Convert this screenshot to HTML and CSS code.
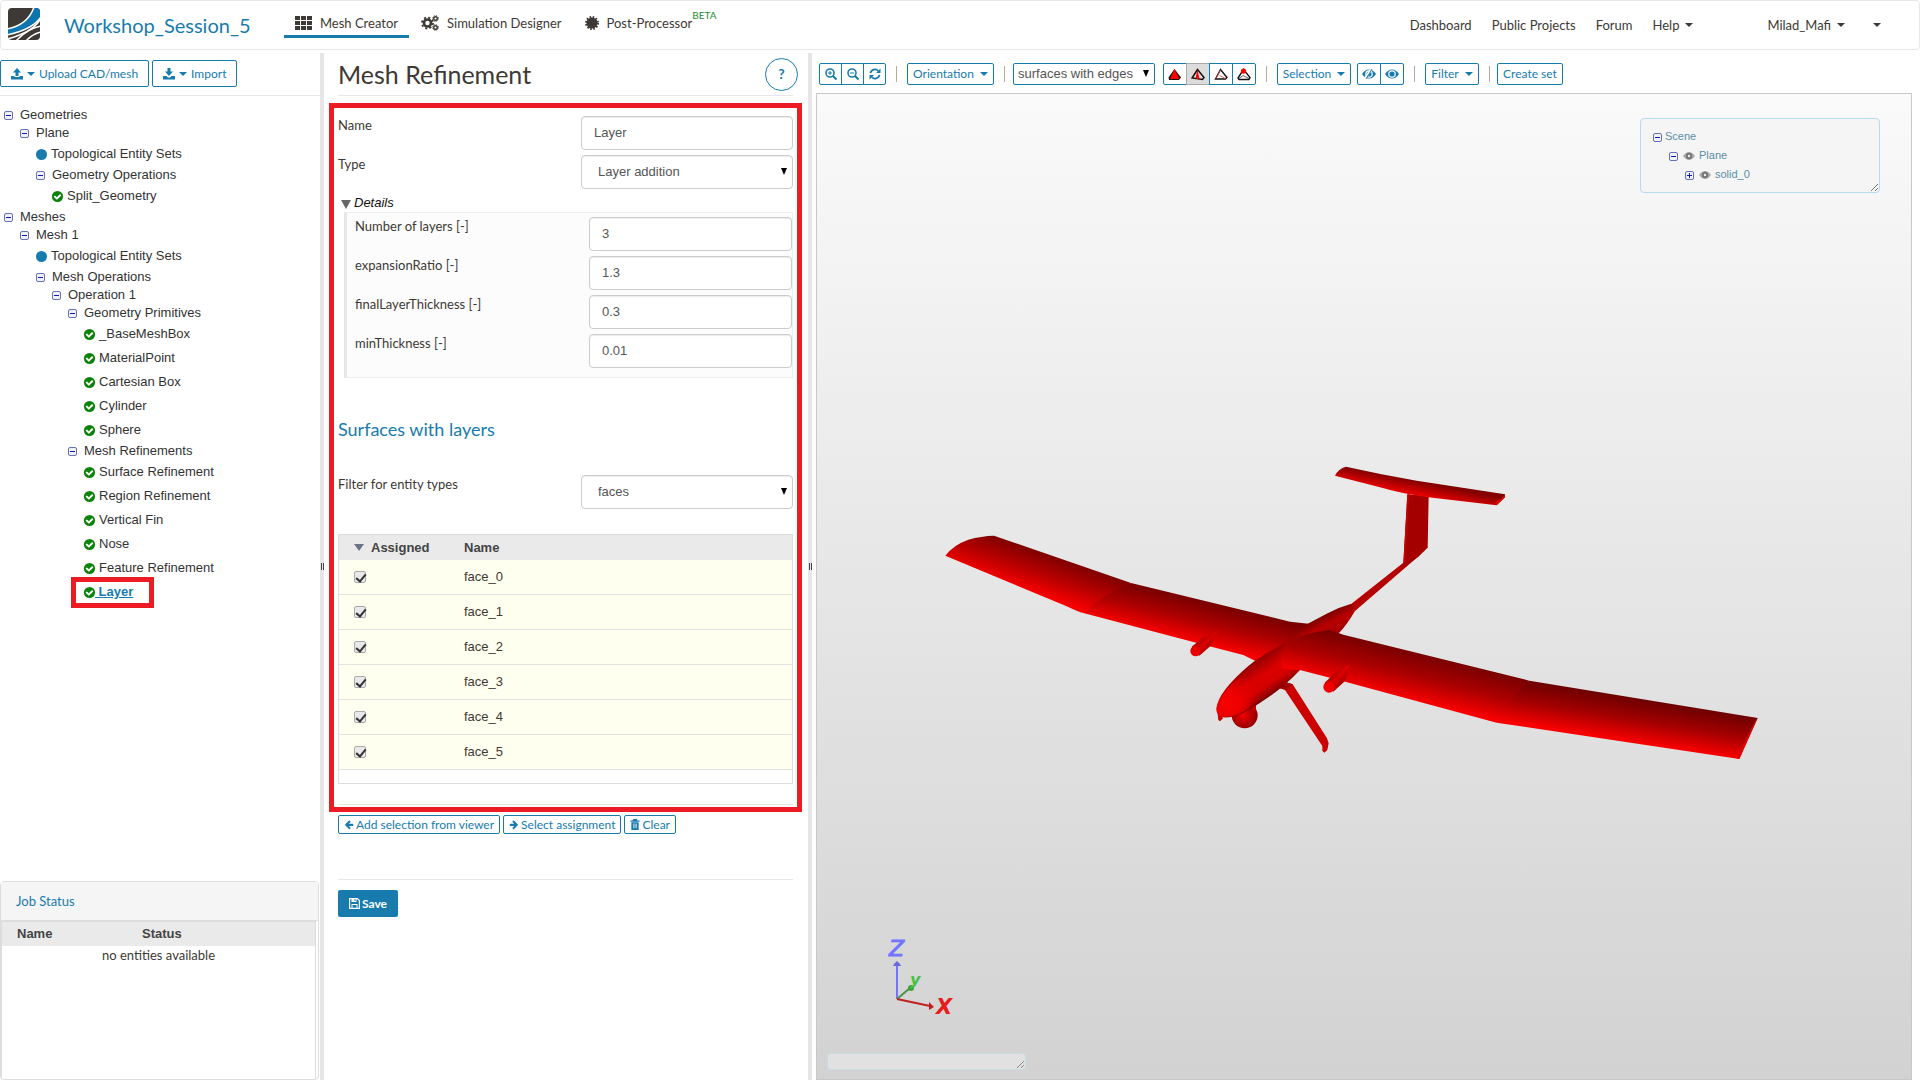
FILE: index.html
```html
<!DOCTYPE html>
<html lang="en">
<head>
<meta charset="utf-8">
<title>Workshop_Session_5 - Mesh Creator</title>
<link rel="stylesheet" href="styles.css">
</head>
<body>
<svg class="sprite" aria-hidden="true">
  <symbol id="i-check" viewBox="0 0 1792 1792"><circle cx="896" cy="896" r="768" fill="#0b830b"/><path fill="#fff" d="M1412 734q0-28-18-46l-91-90q-19-19-45-19t-45 19l-408 407-226-226q-19-19-45-19t-45 19l-91 90q-18 18-18 46 0 27 18 45l362 362q19 19 45 19 27 0 46-19l543-543q18-18 18-45z"/></symbol>
  <symbol id="i-left" viewBox="0 0 1792 1792"><path d="M1664 896v128q0 53-32.5 90.5t-84.5 37.5h-704l293 294q38 36 38 90t-38 90l-75 76q-37 37-90 37-52 0-91-37l-651-652q-37-37-37-90 0-52 37-91l651-650q38-38 91-38 52 0 90 38l75 74q38 38 38 91t-38 91l-293 293h704q52 0 84.5 37.5t32.5 90.5z"/></symbol>
  <symbol id="i-minus" viewBox="0 0 9 9"><rect x=".5" y=".5" width="8" height="8" rx="1.5" fill="#f1f1f8" stroke="#6572b8"/><path d="M2 4.500h5" stroke="#1616b4"/></symbol>
  <symbol id="i-plus" viewBox="0 0 9 9"><rect x=".5" y=".5" width="8" height="8" rx="1.5" fill="#f1f1f8" stroke="#6572b8"/><path d="M2 4.500h5M4.500 2v5" stroke="#1616b4"/></symbol>
  <symbol id="i-eye" viewBox="0 0 14 10"><path d="M0 5Q3 .5 7 .5T14 5Q11 9.500 7 9.500T0 5z"/><circle cx="7" cy="5" r="3.800" fill="#fff"/><circle cx="7" cy="5" r="2.600"/></symbol>
  <symbol id="i-eye-grey" viewBox="0 0 12 8"><path d="M0 4Q3 0 6 0t6 4Q9 8 6 8T0 4z" fill="#aaa"/><circle cx="6" cy="4" r="3.200" fill="#777"/><circle cx="6" cy="4" r="1.200" fill="#eee"/></symbol>
  <symbol id="i-up" viewBox="0 0 12 12"><path d="M6 0l4 4.500H7.500V8h-3V4.500H2zM0 8h3.500v1h5V8H12v3.500H0z"/></symbol>
  <symbol id="i-down" viewBox="0 0 12 12"><path d="M4.500 0h3v3.500H10L6 8 2 3.500h2.500zM0 8h3.500l1.500 1.500h2L8.500 8H12v3.500H0z"/></symbol>
  <symbol id="i-grid" viewBox="0 0 17 14"><path d="M0 0h5v4H0zM6 0h5v4H6zM12 0h5v4h-5zM0 5h5v4H0zM6 5h5v4H6zM12 5h5v4h-5zM0 10h5v4H0zM6 10h5v4H6zM12 10h5v4h-5z"/></symbol>
  <symbol id="i-cogs" viewBox="0 0 18 16"><g fill="none" stroke="currentColor"><circle cx="6.500" cy="8" r="3.500" stroke-width="2.600"/><circle cx="6.500" cy="8" r="5.500" stroke-width="1.800" stroke-dasharray="2.160 2.160"/><circle cx="14.500" cy="3.500" r="1.800" stroke-width="1.400"/><circle cx="14.500" cy="3.500" r="2.900" stroke-width="1" stroke-dasharray="1.140 1.140"/><circle cx="14.500" cy="12.500" r="1.800" stroke-width="1.400"/><circle cx="14.500" cy="12.500" r="2.900" stroke-width="1" stroke-dasharray="1.140 1.140"/></g></symbol>
  <symbol id="i-burst" viewBox="0 0 14 14"><circle cx="7" cy="7" r="5.500"/><circle cx="7" cy="7" r="6" fill="none" stroke="currentColor" stroke-width="2" stroke-dasharray="1.570 1.570"/></symbol>
  <symbol id="i-zin" viewBox="0 0 12 12"><g fill="none" stroke="currentColor"><circle cx="5" cy="5" r="4" stroke-width="1.600"/><path d="M8 8l3.500 3.500" stroke-width="2"/><path d="M3 5h4M5 3v4"/></g></symbol>
  <symbol id="i-zout" viewBox="0 0 12 12"><g fill="none" stroke="currentColor"><circle cx="5" cy="5" r="4" stroke-width="1.600"/><path d="M8 8l3.500 3.500" stroke-width="2"/><path d="M3 5h4"/></g></symbol>
  <symbol id="i-refresh" viewBox="0 0 12 12"><path d="M1.500 5.200A4.500 4.500 0 0 1 9.300 3M10.500 6.800A4.500 4.500 0 0 1 2.700 9" fill="none" stroke="currentColor" stroke-width="1.700"/><path d="M11.500.5v4.500H7zM.5 11.500V7H5z"/></symbol>
  <symbol id="i-trash" viewBox="0 0 10 12"><path d="M3 0h4l.7 1.500H10V3H0V1.500h2.300zM1 3.500h8V12H1z"/><path d="M3.500 5v5M5 5v5M6.500 5v5" stroke="#fff" stroke-width=".7"/></symbol>
  <symbol id="i-save" viewBox="0 0 11 11"><path d="M.6.600h7.800l2 2v7.800H.6z" fill="none" stroke="currentColor" stroke-width="1.200"/><path d="M2.500.5h5V4h-5zM2.500 6h6v5h-1V7h-4v4h-1z"/><path d="M5.500 1h1v2h-1z" fill="#177bae"/></symbol>
  <symbol id="t-a" viewBox="0 0 14 12"><path d="M6.500.5L13 9l-2 2.500H1L.5 9z" fill="#111"/><path d="M6.500 .5l5 10H2z" fill="#f00"/></symbol>
  <symbol id="t-b" viewBox="0 0 14 12"><path d="M6.500 1L1 9.500 11.500 11 13 9z" fill="#ddd" stroke="#111" stroke-width="1.500"/><path d="M6.500 1L4.500 10l4 1z" fill="#f00"/></symbol>
  <symbol id="t-c" viewBox="0 0 14 12"><path d="M6.500 1L1.500 10.500h10L13 9z" fill="#fff" stroke="#111" stroke-width="1.400"/><path d="M6.500 1.500L2 10M5.500 7l6 3" stroke="#e44" stroke-width=".8"/></symbol>
  <symbol id="t-d" viewBox="0 0 14 12"><path d="M6.500 1L1 9.500l1 1.500h10l1-2z" fill="#fff" stroke="#111" stroke-width="1.400"/><path d="M2 10l4-3 6 3" fill="none" stroke="#333" stroke-width=".8"/><circle cx="6.500" cy="2.600" r="2.600" fill="#f00"/></symbol>
</svg>

<header class="topbar">
  <a class="logo" href="#" aria-label="Home"><svg viewBox="0 0 32 32"><defs><clipPath id="lc"><rect width="32" height="32" rx="4"/></clipPath></defs><g clip-path="url(#lc)"><rect width="32" height="32" fill="#3d3935"/><path d="M26 0H32V9Q24 21 0 27V21Q20 17 26 0z" fill="#0d76b0"/><g fill="none" stroke="#fff" stroke-width="1.500"><path d="M26 -1Q20 17 -1 21M33 9Q24 22 -1 27M33 18Q20 20 8 33M33 24Q24 26 18 33"/><path d="M33 10Q26 24 -1 31"/></g></g></svg></a>
  <a class="project" href="#">Workshop_Session_5</a>
  <nav class="tabs">
    <a class="tab active" href="#"><svg class="ic-grid"><use href="#i-grid"/></svg>Mesh Creator</a>
    <a class="tab" href="#"><svg class="ic-cogs"><use href="#i-cogs"/></svg>Simulation Designer</a>
    <a class="tab" href="#"><svg class="ic-burst"><use href="#i-burst"/></svg>Post-Processor<sup>BETA</sup></a>
  </nav>
  <nav class="menu">
    <a href="#">Dashboard</a><a href="#">Public Projects</a><a href="#">Forum</a><a href="#">Help<i class="caret"></i></a>
    <a class="user" href="#">Milad_Mafi<i class="caret"></i></a><a class="more" href="#" aria-label="More"><i class="caret"></i></a>
  </nav>
</header>

<div class="workspace">
  <aside class="side">
    <div class="side-actions">
      <button class="btn"><svg class="ic12"><use href="#i-up"/></svg><i class="caret"></i>Upload CAD/mesh</button>
      <button class="btn"><svg class="ic12"><use href="#i-down"/></svg><i class="caret"></i>Import</button>
    </div>
    <ul class="tree">
      <li><span class="node"><svg class="ex"><use href="#i-minus"/></svg>Geometries</span>
        <ul>
          <li><span class="node"><svg class="ex"><use href="#i-minus"/></svg>Plane</span>
            <ul>
              <li><a class="leaf" href="#"><i class="dot"></i>Topological Entity Sets</a></li>
              <li><span class="node"><svg class="ex"><use href="#i-minus"/></svg>Geometry Operations</span>
                <ul><li><a class="leaf" href="#"><svg class="ok"><use href="#i-check"/></svg>Split_Geometry</a></li></ul></li>
            </ul></li>
        </ul></li>
      <li><span class="node"><svg class="ex"><use href="#i-minus"/></svg>Meshes</span>
        <ul>
          <li><span class="node"><svg class="ex"><use href="#i-minus"/></svg>Mesh 1</span>
            <ul>
              <li><a class="leaf" href="#"><i class="dot"></i>Topological Entity Sets</a></li>
              <li><span class="node"><svg class="ex"><use href="#i-minus"/></svg>Mesh Operations</span>
                <ul>
                  <li><span class="node"><svg class="ex"><use href="#i-minus"/></svg>Operation 1</span>
                    <ul>
                      <li><span class="node"><svg class="ex"><use href="#i-minus"/></svg>Geometry Primitives</span>
                        <ul>
                          <li><a class="leaf" href="#"><svg class="ok"><use href="#i-check"/></svg>_BaseMeshBox</a></li>
                          <li><a class="leaf" href="#"><svg class="ok"><use href="#i-check"/></svg>MaterialPoint</a></li>
                          <li><a class="leaf" href="#"><svg class="ok"><use href="#i-check"/></svg>Cartesian Box</a></li>
                          <li><a class="leaf" href="#"><svg class="ok"><use href="#i-check"/></svg>Cylinder</a></li>
                          <li><a class="leaf" href="#"><svg class="ok"><use href="#i-check"/></svg>Sphere</a></li>
                        </ul></li>
                      <li><span class="node"><svg class="ex"><use href="#i-minus"/></svg>Mesh Refinements</span>
                        <ul>
                          <li><a class="leaf" href="#"><svg class="ok"><use href="#i-check"/></svg>Surface Refinement</a></li>
                          <li><a class="leaf" href="#"><svg class="ok"><use href="#i-check"/></svg>Region Refinement</a></li>
                          <li><a class="leaf" href="#"><svg class="ok"><use href="#i-check"/></svg>Vertical Fin</a></li>
                          <li><a class="leaf" href="#"><svg class="ok"><use href="#i-check"/></svg>Nose</a></li>
                          <li><a class="leaf" href="#"><svg class="ok"><use href="#i-check"/></svg>Feature Refinement</a></li>
                          <li><a class="leaf current" href="#"><svg class="ok"><use href="#i-check"/></svg><b>&nbsp;Layer</b></a></li>
                        </ul></li>
                    </ul></li>
                </ul></li>
            </ul></li>
        </ul></li>
    </ul>
    <section class="jobs">
      <h2>Job Status</h2>
      <div class="jobs-body">
        <table>
          <thead><tr><th class="job-name">Name</th><th>Status</th></tr></thead>
          <tbody><tr><td colspan="2">no entities available</td></tr></tbody>
        </table>
      </div>
    </section>
  </aside>
  <div class="splitter"><i></i></div>

  <main class="props">
    <div class="props-head"><h1>Mesh Refinement</h1><button class="help" aria-label="Help">?</button></div>
    <div class="marked">
      <div class="field"><label for="name">Name</label><input id="name" type="text" value="Layer"></div>
      <div class="field"><label for="type">Type</label><span class="pick"><select id="type"><option>Layer addition</option></select></span></div>
      <details class="details" open>
        <summary>Details</summary>
        <div class="sub">
          <div class="field"><label for="nl">Number of layers [-]</label><input id="nl" type="text" value="3"></div>
          <div class="field"><label for="er">expansionRatio [-]</label><input id="er" type="text" value="1.3"></div>
          <div class="field"><label for="ft">finalLayerThickness [-]</label><input id="ft" type="text" value="0.3"></div>
          <div class="field"><label for="mt">minThickness [-]</label><input id="mt" type="text" value="0.01"></div>
        </div>
      </details>
      <h2 class="section">Surfaces with layers</h2>
      <div class="field"><label for="filter">Filter for entity types</label><span class="pick"><select id="filter"><option>faces</option></select></span></div>
      <div class="faces">
        <table>
          <thead><tr><th class="assigned"><i class="sort"></i>Assigned</th><th>Name</th></tr></thead>
          <tbody>
            <tr><td><input type="checkbox" id="f0" checked></td><td><label for="f0">face_0</label></td></tr>
            <tr><td><input type="checkbox" id="f1" checked></td><td><label for="f1">face_1</label></td></tr>
            <tr><td><input type="checkbox" id="f2" checked></td><td><label for="f2">face_2</label></td></tr>
            <tr><td><input type="checkbox" id="f3" checked></td><td><label for="f3">face_3</label></td></tr>
            <tr><td><input type="checkbox" id="f4" checked></td><td><label for="f4">face_4</label></td></tr>
            <tr><td><input type="checkbox" id="f5" checked></td><td><label for="f5">face_5</label></td></tr>
          </tbody>
        </table>
      </div>
      <hr>
    </div>
    <div class="assign">
      <button class="btn mini"><svg class="ic10"><use href="#i-left"/></svg>Add selection from viewer</button>
      <button class="btn mini"><svg class="ic10 flip"><use href="#i-left"/></svg>Select assignment</button>
      <button class="btn mini"><svg class="ic10"><use href="#i-trash"/></svg>Clear</button>
    </div>
    <hr>
    <button class="save"><svg class="ic11"><use href="#i-save"/></svg>Save</button>
  </main>
  <div class="splitter"><i></i></div>

  <section class="viewer">
    <div class="toolbar">
      <div class="group g3">
        <button class="btn" aria-label="Zoom in"><svg class="ic12"><use href="#i-zin"/></svg></button>
        <button class="btn" aria-label="Zoom out"><svg class="ic12"><use href="#i-zout"/></svg></button>
        <button class="btn" aria-label="Reset view"><svg class="ic12"><use href="#i-refresh"/></svg></button>
      </div>
      <i class="sep"></i>
      <button class="btn w-orient">Orientation<i class="caret"></i></button>
      <i class="sep"></i>
      <span class="pick render"><select aria-label="Render mode"><option>surfaces with edges</option></select></span>
      <div class="group g4">
        <button class="btn" aria-label="Pick volumes"><svg class="ic14"><use href="#t-a"/></svg></button>
        <button class="btn pressed" aria-label="Pick faces"><svg class="ic14"><use href="#t-b"/></svg></button>
        <button class="btn" aria-label="Pick edges"><svg class="ic14"><use href="#t-c"/></svg></button>
        <button class="btn" aria-label="Pick nodes"><svg class="ic14"><use href="#t-d"/></svg></button>
      </div>
      <i class="sep"></i>
      <button class="btn w-select">Selection<i class="caret"></i></button>
      <div class="group g2">
        <button class="btn" aria-label="Hide"><svg class="eye"><use href="#i-eye"/><path d="M3 9.500L9 .5" stroke="#fff" stroke-width="2.400"/><path d="M4 10L10 0" stroke="currentColor"/></svg></button>
        <button class="btn" aria-label="Show"><svg class="eye"><use href="#i-eye"/></svg></button>
      </div>
      <i class="sep"></i>
      <button class="btn w-filter">Filter<i class="caret"></i></button>
      <i class="sep last"></i>
      <button class="btn w-set">Create set</button>
    </div>
    <div class="canvas">
      <svg class="model" viewBox="817 94 1094 985" role="img" aria-label="Plane model">
        <defs>
          <linearGradient id="w1" gradientUnits="userSpaceOnUse" x1="282" y1="287" x2="241" y2="405"><stop offset="0" stop-color="#800000"/><stop offset=".5" stop-color="#b80000"/><stop offset="1" stop-color="#fb0000"/></linearGradient>
          <linearGradient id="w2" gradientUnits="userSpaceOnUse" x1="693" y1="429" x2="663" y2="552"><stop offset="0" stop-color="#780000"/><stop offset=".5" stop-color="#ac0000"/><stop offset="1" stop-color="#f80000"/></linearGradient>
          <linearGradient id="w3" gradientUnits="userSpaceOnUse" x1="1330" y1="584" x2="1296" y2="724"><stop offset="0" stop-color="#780000"/><stop offset=".5" stop-color="#ac0000"/><stop offset="1" stop-color="#fb0000"/></linearGradient>
          <linearGradient id="w4" gradientUnits="userSpaceOnUse" x1="1888" y1="722" x2="1867" y2="852"><stop offset="0" stop-color="#6c0000"/><stop offset=".5" stop-color="#a40000"/><stop offset="1" stop-color="#f80000"/></linearGradient>
          <linearGradient id="tp" gradientUnits="userSpaceOnUse" x1="1550" y1="122" x2="1541" y2="168"><stop offset="0" stop-color="#800000"/><stop offset="1" stop-color="#f40000"/></linearGradient>
          <linearGradient id="fu" gradientUnits="userSpaceOnUse" x1="1040" y1="670" x2="1110" y2="775"><stop offset="0" stop-color="#880000"/><stop offset=".45" stop-color="#dc0000"/><stop offset=".7" stop-color="#d40000"/><stop offset="1" stop-color="#700000"/></linearGradient>
          <linearGradient id="rc" gradientUnits="userSpaceOnUse" x1="1270" y1="525" x2="1298" y2="580"><stop offset="0" stop-color="#780000"/><stop offset=".5" stop-color="#b80000"/><stop offset="1" stop-color="#a80000"/></linearGradient>
          <linearGradient id="pd" x1="0" y1="0" x2="1" y2="1"><stop offset=".2" stop-color="#8c0000"/><stop offset=".5" stop-color="#dc0000"/><stop offset=".85" stop-color="#880000"/></linearGradient>
          <radialGradient id="ns" gradientUnits="userSpaceOnUse" cx="985" cy="790" r="95"><stop offset="0" stop-color="#f80000"/><stop offset=".4" stop-color="#ec0000"/><stop offset="1" stop-color="#e00000" stop-opacity="0"/></radialGradient>
          <radialGradient id="bl" cx=".45" cy=".5" r=".55"><stop offset="0" stop-color="#f00000"/><stop offset="1" stop-color="#900000"/></radialGradient>
        </defs>
        <g transform="translate(900 440) scale(.33333)">
          <path fill="url(#w2)" d="M693 429L1170 545L1240 553L1190 600L1068 664L1030 645L937 621L550 519L520 480z"/>
          <path fill="url(#w1)" d="M136 347Q160 315 205 299Q245 288 282 287L693 429Q600 470 550 519Q535 516 500 499z"/>
          <path fill="#b40000" d="M1346 498L1510 368L1560 345L1365 513z"/>
          <path fill="#a40000" d="M1522 163L1586 168L1583 323L1555 350L1509 383z"/>
          <path fill="#c80000" d="M1522 163H1528L1515 366L1510 372z"/>
          <path fill="url(#tp)" d="M1305 107Q1315 86 1338 80Q1440 103 1550 122L1815 163V172L1790 196L1585 172Q1500 160 1440 142z"/>
          <path fill="#e80000" d="M1815 165V172L1790 196L1786 190z"/>
          <circle cx="1034" cy="826" r="39" fill="url(#bl)"/><path d="M1040 800L1068 793V815z" fill="#c80000"/>
          <path d="M953 822L955 840L960 844L970 834z" fill="#c80000"/>
          <path fill="#cc0000" d="M1130 742L1158 727L1178 733L1281 895L1286 910L1282 930L1273 938L1267 932V918L1155 750z"/><path d="M1130 742L1158 727L1178 733L1160 750z" fill="#a00000"/>
          <path fill="url(#rc)" d="M1352 492Q1315 502 1280 521L1222 552L1150 610L1290 600L1320 576Q1342 552 1365 513z"/>
          <path fill="url(#fu)" d="M1185 594Q1090 640 1045 678Q955 755 949 805Q948 822 962 831Q990 837 1030 818Q1130 765 1200 690L1260 600z"/>
          <path fill="url(#ns)" d="M1060 672Q960 755 951 805Q950 822 962 829Q990 835 1030 815Q1070 790 1080 770z"/>
          <path fill="url(#w3)" d="M1145 686V640L1160 607L1185 594Q1240 575 1290 570L1330 584L1888 722L1790 848L1330 724L1200 690z"/>
          <path fill="url(#w4)" d="M1888 722L2573 834L2518 957L1790 848Q1820 785 1888 722z"/>
          <path fill="#e40000" d="M2573 834L2518 957L2510 955L2567 840z"/>
          <path fill="url(#pd)" d="M875 620L912 590L954 572L936 614L898 647z"/><circle cx="887" cy="633" r="16" fill="#e80000"/>
          <path fill="url(#pd)" d="M1274 728L1312 692L1350 672L1336 722L1300 755z"/><circle cx="1287" cy="741" r="17" fill="#f00000"/>
        </g>
        <g class="axes">
          <path d="M897 999V965" stroke="#7373ff" stroke-width="2"/><path d="M893 966l1-2 3-3 3 3 1 2z" fill="#6a6ad8"/>
          <path d="M897 999l13-11" stroke="#4a934a" stroke-width="2"/><circle cx="911" cy="988" r="3" fill="#3ba03b"/>
          <path d="M897 999l33 7" stroke="#c22020" stroke-width="2"/><path d="M929 1002l5 5-5 3z" fill="#c22020"/>
          <text class="z" x="889" y="956" font-size="22" fill="#7373ff">Z</text>
          <text x="910" y="985" font-size="16" fill="#45c045">y</text>
          <text x="936" y="1014" font-size="21" fill="#e81c1c">X</text>
        </g>
      </svg>
      <div class="scene">
        <ul>
          <li><span><svg class="ex"><use href="#i-minus"/></svg>Scene</span>
            <ul><li><span><svg class="ex"><use href="#i-minus"/></svg><svg class="vis"><use href="#i-eye-grey"/></svg>Plane</span>
              <ul><li><span><svg class="ex"><use href="#i-plus"/></svg><svg class="vis"><use href="#i-eye-grey"/></svg>solid_0</span></li></ul></li></ul></li>
        </ul>
        <svg class="grip"><path d="M0 7L7 0M4 7l3-3" stroke="#777"/></svg>
      </div>
      <div class="console"><svg class="grip"><path d="M0 7L7 0M4 7l3-3" stroke="#888"/></svg></div>
    </div>
  </section>
</div>
</body>
</html>
```
FILE: styles.css
```css
* { box-sizing: border-box; }
body { margin: 0; height: 100vh; display: flex; flex-direction: column; background: #fff; color: #3d3935; font: 13px/20px Lato, "Open Sans", sans-serif; overflow: hidden; }
a { color: inherit; text-decoration: none; }
ul { list-style: none; margin: 0; padding: 0; }
button { font: inherit; margin: 0; padding: 0; cursor: pointer; }
svg { fill: currentColor; flex: none; }
hr { border: 0; border-top: 1px solid #e7e7e7; margin: 0; }
.sprite { display: none; }
.caret { width: 0; height: 0; border: 4px solid transparent; border-top-color: currentColor; border-bottom: 0; flex: none; }
.ic12 { width: 12px; height: 12px; }
.ic11 { width: 11px; height: 11px; }
.ic10 { width: 10px; height: 11px; }
.ic14 { width: 14px; height: 13px; }
.eye { width: 14px; height: 10px; }
.flip { transform: scaleX(-1); }

.topbar { flex: none; height: 50px; display: flex; align-items: center; border: 1px solid #e7e7e7; border-radius: 4px; padding: 0 38px 0 7px; }
.logo, .logo svg { display: block; width: 32px; height: 32px; }
.logo { margin: 0 24px 2px 0; }
.project { width: 220px; font-size: 20px; line-height: 24px; color: #177bae; }
.tabs { display: flex; gap: 1px; height: 28px; margin-bottom: 3px; }
.tab { display: flex; align-items: flex-start; padding: 3px 11px 0; gap: 8px; white-space: nowrap; }
.tab svg { margin-top: 3px; }
.tab.active { border-bottom: 3px solid #177bae; }
.ic-grid { width: 17px; height: 14px; }
.tab .ic-cogs { width: 18px; height: 16px; margin-top: 2px; }
.ic-burst { width: 14px; height: 14px; }
.tab sup { font-size: 10px; line-height: 12px; color: #1b8f2f; margin: -4px 0 0 -8px; }
.menu { display: flex; gap: 20px; margin: 0 0 1px auto; }
.menu a { display: flex; align-items: center; gap: 6px; }
.menu .user { margin-left: 54px; }
.menu .more { margin-left: 8px; }

.workspace { flex: 1; min-height: 0; display: flex; margin-top: 3px; }
.splitter { flex: none; width: 4px; background: #e6e6e6; display: flex; align-items: center; justify-content: center; }
.splitter i { width: 3px; height: 7px; border: solid #444; border-width: 0 1px; }

.btn { display: inline-flex; align-items: center; justify-content: center; background: #fff; color: #177bae; border: 1px solid #177bae; border-radius: 2px; white-space: nowrap; }
.side { flex: none; width: 320px; display: flex; flex-direction: column; }
.side-actions { display: flex; gap: 3px; padding: 7px 0 8px; border-bottom: 1px solid #e7e7e7; }
.side-actions .btn { height: 27px; padding: 0 10px; gap: 4px; font-size: 12px; }
.tree { flex: 1; min-height: 0; padding: 10px 0 0 4px; font: 13px/18px "Liberation Sans", Arial, sans-serif; color: #333; }
.tree ul { padding-left: 16px; }
.node { display: flex; align-items: center; height: 18px; }
.ex { width: 9px; height: 9px; margin: 1px 7px 0 0; }
.leaf { position: relative; display: flex; align-items: center; height: 24px; }
.dot { width: 11px; height: 11px; border-radius: 50%; background: #177bae; margin-right: 4px; }
.ok { width: 13px; height: 13px; margin: 0 3px 0 -1px; }
.current { width: max-content; color: #177bae; }
.current .ok { margin-right: -1px; }
.current b { text-decoration: underline; }
.current::after { content: ""; position: absolute; inset: -3px -21px -4px -13px; border: 5px solid #ed1c24; }

.jobs { flex: none; height: 199px; border: 1px solid #ddd; border-radius: 4px; margin-right: 1px; display: flex; flex-direction: column; }
.jobs h2 { margin: 0; height: 39px; line-height: 38px; padding-left: 15px; font-size: 13px; font-weight: 400; color: #177bae; background: #f5f5f5; border-bottom: 1px solid #ddd; }
.jobs-body { flex: 1; margin-right: 2px; border: 1px solid #ddd; border-bottom: 0; }
table { border-collapse: separate; border-spacing: 0; width: 100%; table-layout: fixed; }
th { font: bold 13px/18px "Liberation Sans", Arial, sans-serif; text-align: left; background: #eaeaea; padding: 0; color: #444; }
.jobs th { height: 24px; }
.jobs th.job-name { width: 140px; padding-left: 15px; }
.jobs td { text-align: center; padding: 0; font-size: 13px; line-height: 18px; }

.props { flex: none; width: 484px; padding: 0 15px 0 14px; line-height: 18px; }
.props-head { display: flex; align-items: center; justify-content: space-between; height: 43px; border-bottom: 1px solid #e7e7e7; }
.props-head h1 { margin: 0; font-size: 25px; line-height: 30px; font-weight: 400; }
.help { width: 33px; height: 33px; margin-right: -5px; border: 1px solid #177bae; border-radius: 50%; background: #fff; color: #177bae; font-size: 14px; font-weight: 700; }
.marked { margin: 7px -9px 0; border: 5px solid #ed1c24; padding: 8px 4px 2px; }
.field { display: flex; justify-content: space-between; align-items: flex-start; margin-bottom: 5px; }
.field input, .pick { width: 212px; height: 34px; }
.field input, select { border: 1px solid #ccc; border-radius: 4px; background: #fff; color: #555; font: 13px/18px "Liberation Sans", Arial, sans-serif; box-shadow: inset 0 1px 1px #ececec; }
.field input { padding: 0 12px 2px; }
.pick { position: relative; }
.pick select { appearance: none; width: 100%; height: 100%; padding: 0 16px; }
.pick::after { content: ""; position: absolute; right: 6px; top: 13px; border: 3px solid transparent; border-top: 7px solid #000; border-bottom: 0; }
summary { display: flex; align-items: center; height: 18px; margin-left: 3px; font: italic 13px/18px "Liberation Sans", Arial, sans-serif; color: #111; }
summary::before { content: ""; border: 5px solid transparent; border-top: 9px solid #666; border-bottom: 0; margin: 3px 3px 0 0; }
.sub { margin: 0 0 0 6px; border: 1px solid #eee; border-left: 3px solid #e7e7e7; background: #fcfcfc; padding: 4px 0 4px 8px; }
.sub .field input { width: 203px; }
.section { margin: 39px 0 34px; font-size: 18px; line-height: 24px; font-weight: 400; color: #177bae; }
.faces { margin-top: 25px; height: 250px; border: 1px solid #ddd; }
.faces th { height: 25px; }
.faces td { height: 35px; padding: 0; background: #ffffef; border-bottom: 1px solid #e3e3e3; font: 13px/18px "Liberation Sans", Arial, sans-serif; }
.faces .assigned { width: 125px; padding-left: 15px; }
.sort { display: inline-block; border: 5px solid transparent; border-top: 7px solid #6b7683; border-bottom: 0; margin: 0 7px 1px 0; }
.faces input { appearance: none; display: block; width: 12px; height: 12px; margin: 0 0 0 15px; border: 1px solid #aaa; border-radius: 2px; background: #e9e9e9; position: relative; }
.faces input:checked::after { content: ""; position: absolute; left: 3px; top: 0; width: 4px; height: 8px; border: solid #333; border-width: 0 2px 2px 0; transform: rotate(40deg); }
.marked > hr { margin-top: 20px; }
.assign { display: flex; gap: 3px; padding: 3px 0 45px; }
.mini { height: 19px; padding: 0 5px; gap: 2px; font-size: 12px; }
.save { display: inline-flex; align-items: center; justify-content: center; gap: 2px; width: 60px; height: 27px; margin-top: 10px; border: 0; border-radius: 2px; background: #177bae; color: #fff; font-size: 12px; font-weight: 700; }

.viewer { flex: 1; min-width: 0; display: flex; flex-direction: column; padding: 0 8px 0 4px; }
.toolbar { flex: none; display: flex; align-items: center; height: 40px; padding: 2px 0 0 3px; font-size: 12px; line-height: 18px; }
.toolbar .btn { height: 22px; gap: 6px; font-size: 12px; padding: 0; }
.group { display: flex; }
.group .btn { width: 24px; margin-right: -1px; border-radius: 0; }
.group .btn:first-child { border-radius: 2px 0 0 2px; }
.group .btn:last-child { border-radius: 0 2px 2px 0; margin-right: 0; }
.g3 .btn { width: 23px; }
.group .pressed { background: #dcdcdc; border-color: #aaa; }
.sep { width: 1px; height: 16px; background: #b5aa9f; margin: 0 10px; }
.sep + .render { margin-left: -2px; }
.w-orient { width: 87px; }
.render { width: 142px; height: 22px; margin-right: 8px; }
.render select { border-color: #177bae; border-radius: 2px; padding: 0 4px; box-shadow: none; }
.render::after { top: 7px; }
.w-select { width: 74px; margin-right: 6px; }
.w-filter { width: 54px; }
.sep.last { margin-right: 7px; }
.w-set { width: 66px; }
.canvas { flex: 1; min-height: 0; position: relative; border: 1px solid #c8c8c8; background: linear-gradient(#fafafa, #d2d2d2); }
.model { display: block; width: 100%; height: 100%; }
.axes text { font-family: "DejaVu Sans", sans-serif; font-style: italic; font-weight: 700; }
.axes .z { font-weight: 400; stroke: #7373ff; }
.scene { position: absolute; top: 24px; right: 31px; width: 240px; height: 75px; padding: 8px 12px; border: 1px solid #b4dde8; border-radius: 4px; color: #5b8ea6; background: #f5f5f5; font: 11px/19px "Liberation Sans", Arial, sans-serif; }
.scene ul ul { padding-left: 16px; }
.scene span { display: flex; align-items: center; height: 19px; }
.scene .ex { margin-right: 3px; }
.vis { width: 12px; height: 8px; margin: 0 4px 0 2px; }
.grip { position: absolute; right: 1px; bottom: 1px; width: 7px; height: 7px; }
.console { position: absolute; left: 10px; bottom: 9px; width: 199px; height: 17px; border: 1px solid #c8dae2; border-radius: 3px; background: #e1e1e1; }
```
